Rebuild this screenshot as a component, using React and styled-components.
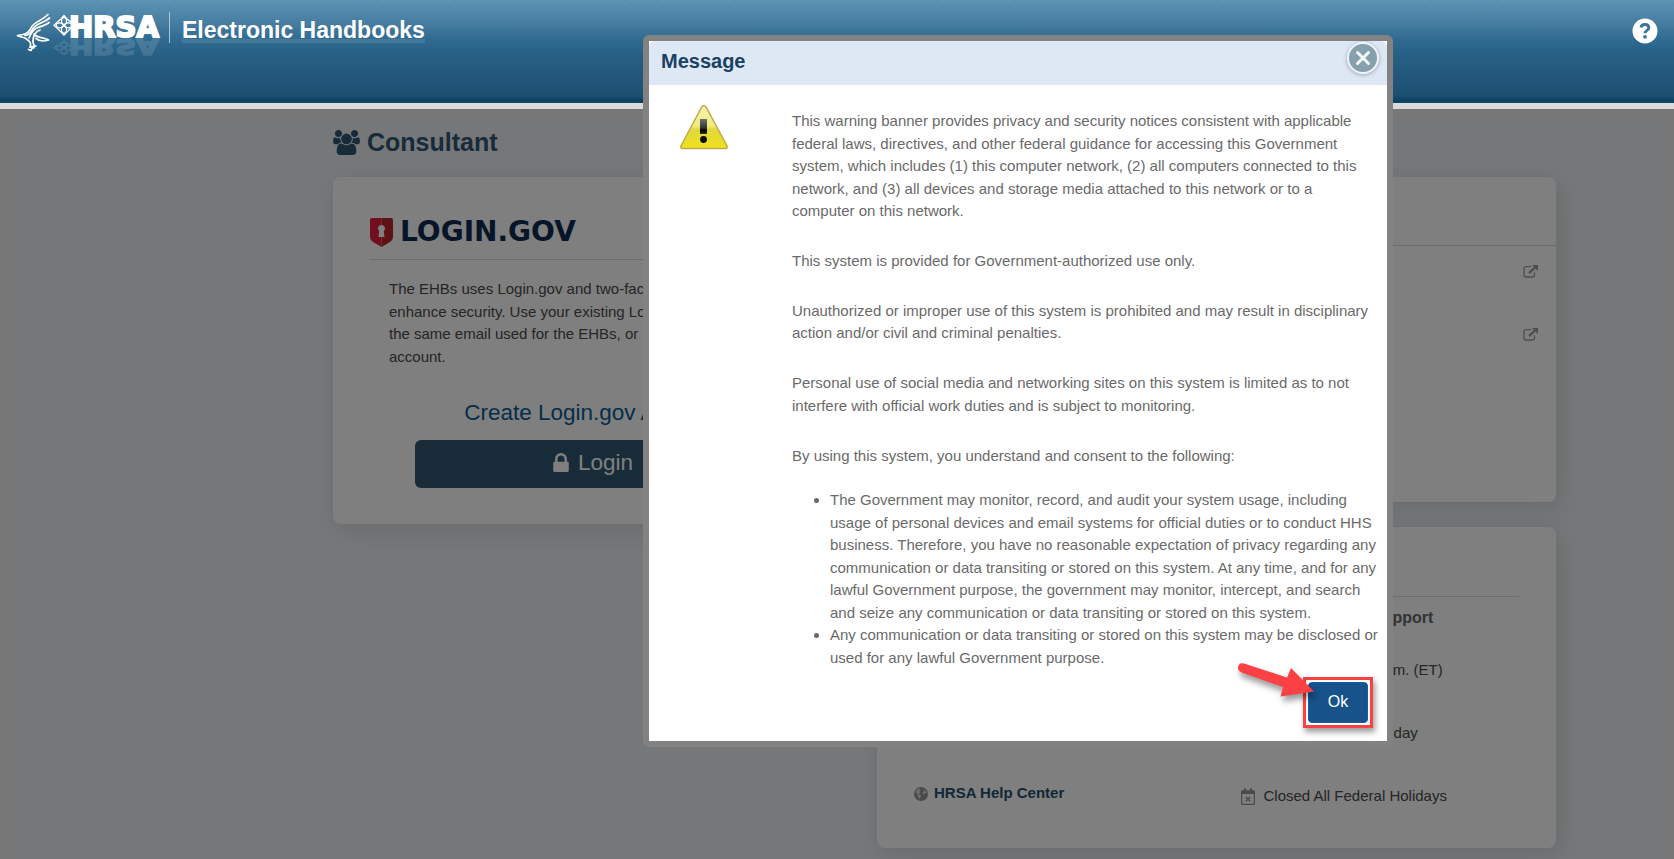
import styled, { createGlobalStyle } from "styled-components";

const GlobalStyle = createGlobalStyle`
    * {
        box-sizing: border-box;
    }
    body {
        margin: 0;
        font-family: "Liberation Sans", Arial, sans-serif;
        font-size: 15px;
        line-height: 1.5;
        color: #4a4a4a;
    }
    h1, h2, h3, p, ul {
        margin: 0;
        padding: 0;
        font-size: inherit;
    }
    a {
        color: inherit;
        text-decoration: none;
    }
`;

const Page = styled.div`
    position: relative;
    display: flex;
    flex-direction: column;
    min-height: 100vh;
`;

/* ---------- header ---------- */

const Header = styled.header`
    display: flex;
    align-items: flex-start;
    justify-content: space-between;
    height: 109px;
    padding: 0 16px;
    border-bottom: 6px solid #dbdada;
    background: linear-gradient(
            to bottom,
            rgba(92, 148, 182, 0.5) 0,
            #457c9f 24px,
            #2f6a90 40px,
            #275f84 55px,
            #1e5174 92px,
            #1a4e70 96px,
            #0d4362 100px,
            #0f4565 103px
        ),
        repeating-linear-gradient(
            135deg,
            #6094b5 0 3px,
            #5b91b3 3px 6px
        );
`;

const Brand = styled.div`
    display: flex;
    align-items: flex-start;
`;

const BrandTitle = styled.a`
    margin-top: 12px;
    padding: 0 0 0 12px;
    border-left: 1px solid #a9c4d4;
    color: #fff;
    font-size: 23px;
    font-weight: bold;
    line-height: 33px;

    span {
        display: block;
        height: 31px;
        border-bottom: 4px solid rgba(255, 255, 255, 0.1);
        line-height: 36px;
    }
`;

const HelpButton = styled.button`
    display: flex;
    margin-top: 18px;
    padding: 0;
    border: 0;
    background: none;
    cursor: pointer;
`;

/* ---------- page behind the dialog ---------- */

const Main = styled.main`
    position: relative;
    flex: 1;
    padding: 7px 13px 0;
    background: #efefef;

    &::after {
        content: "";
        position: absolute;
        inset: 0;
        background: rgba(0, 0, 0, 0.5);
    }
`;

const Content = styled.div`
    min-height: 100%;
    padding: 10px 105px 11px 320px;
    background: #eceff2;
`;

const PageTitle = styled.h1`
    display: flex;
    align-items: center;
    gap: 7px;
    height: 32px;
    margin-bottom: 19px;
    color: #2e5672;
    font-size: 25px;
    line-height: 34px;
`;

const Columns = styled.div`
    display: grid;
    grid-template-columns: 520fr 679fr;
    gap: 24px;
    align-items: start;
`;

const Stack = styled.div`
    display: grid;
    gap: 25px;
`;

const Card = styled.section`
    border-radius: 8px;
    background: #fff;
    box-shadow: 4px 6px 24px rgba(40, 50, 40, 0.14);
`;

const LoginCard = styled(Card)`
    height: 347px;
    padding: 37px;
`;

const LoginLogo = styled.div`
    display: flex;
    align-items: center;
    gap: 7px;
    height: 46px;
    padding-bottom: 9px;
    border-bottom: 1px solid #d8d8d8;
    color: #0c2a50;
    font-family: "DejaVu Sans", sans-serif;
    font-size: 28px;
    font-weight: bold;
    line-height: 1;
`;

const LoginText = styled.p`
    padding: 18px 0 0 19px;
    white-space: nowrap;
`;

const CreateLink = styled.a`
    display: block;
    margin-top: 28px;
    color: #0b5a94;
    font-size: 1.5em;
    text-align: center;
`;

const LoginButton = styled.button`
    display: flex;
    align-items: center;
    justify-content: center;
    gap: 9px;
    width: calc(100% - 90px);
    height: 48px;
    margin: 10px 45px 0;
    padding: 0 0 2px;
    border: 0;
    border-radius: 6px;
    background: #305672;
    color: #fff;
    font-family: inherit;
    font-size: 1.5em;
    cursor: pointer;
`;

const ResourceCard = styled(Card)`
    height: 325px;
`;

const ResourceTitle = styled.div`
    height: 69px;
    border-bottom: 1px solid #d8d8d8;
`;

const ResourceLink = styled.a`
    display: flex;
    align-items: center;
    justify-content: flex-end;
    height: 63px;
    padding: 0 18px 13px 37px;
`;

const SupportCard = styled(Card)`
    height: 321px;
    padding: 24px 37px;
`;

const SupportTitle = styled.div`
    height: 46px;
    border-bottom: 1px solid #d8d8d8;
`;

const SupportGrid = styled.div`
    display: grid;
    grid-template-columns: 1fr 1fr;
    gap: 48px;
`;

const SupportColumn = styled.div`
    display: flex;
    flex-direction: column;
    justify-content: ${({ $end }) => ($end ? "flex-end" : "flex-start")};
    padding-bottom: ${({ $end }) => ($end ? "3px" : "0")};
    white-space: nowrap;
`;

const SupportHeading = styled.h3`
    height: 42px;
    padding-top: 9px;
    color: #666;
    font-size: 16px;
`;

const SupportRow = styled.div`
    display: flex;
    align-items: center;
    gap: 9px;
    height: 63px;
`;

const HelpCenterLink = styled.a`
    display: flex;
    align-items: center;
    gap: 6px;
    height: 63px;
    color: #24506e;
    font-weight: bold;
`;

/* ---------- dialog ---------- */

const DialogLayer = styled.div`
    position: absolute;
    inset: 0;
    display: flex;
    justify-content: center;
    align-items: flex-start;
    padding: 35px 0 0 362px;
`;

const Dialog = styled.div`
    width: 750px;
    border: 6px solid #828282;
    border-radius: 6px;
    background: #fff;
    color: #6a6a6a;
`;

const DialogHeader = styled.header`
    display: flex;
    align-items: flex-start;
    justify-content: space-between;
    height: 44px;
    padding: 1px 8px 0 12px;
    border-bottom: 1px solid #e6e6e6;
    border-radius: 6px 6px 0 0;
    background: #dee8f5;
`;

const DialogTitle = styled.h2`
    color: #1a4164;
    font-size: 20px;
    line-height: 38px;
`;

const CloseButton = styled.button`
    display: flex;
    align-items: center;
    justify-content: center;
    width: 32px;
    height: 32px;
    padding: 0;
    border: 2px solid #f1f5fa;
    border-radius: 50%;
    background: #86a0ad;
    box-shadow: 0 1px 4px rgba(60, 70, 80, 0.4);
    cursor: pointer;
`;

const DialogBody = styled.div`
    display: grid;
    grid-template-columns: 48px 1fr;
    column-gap: 64px;
    padding: 20px 5px 0 31px;
`;

const Notice = styled.div`
    padding-top: 5px;

    p {
        margin-bottom: 1.83em;
        padding-right: 6px;
    }
    p:last-of-type {
        margin-bottom: 22px;
    }
    ul {
        padding-left: 38px;
    }
`;

const DialogFooter = styled.footer`
    display: flex;
    justify-content: flex-end;
    padding: 8px 14px 13px;
`;

const Highlight = styled.div`
    position: relative;
    padding: 2px;
    border: 3px solid #fb4143;
    box-shadow: 2px 4px 6px rgba(0, 0, 0, 0.4);
`;

const Arrow = styled.svg`
    position: absolute;
    right: 54px;
    bottom: 26px;
    filter: drop-shadow(2px 5px 3px rgba(0, 0, 0, 0.4));
`;

const OkButton = styled.button`
    display: block;
    width: 60px;
    height: 41px;
    padding: 0 0 2px;
    border: 1px solid #0d5fae;
    border-radius: 4px;
    background: #17528a;
    color: #fff;
    font-family: inherit;
    font-size: 16px;
    cursor: pointer;
`;

/* ---------- drawings ---------- */

const HrsaLogo = () => (
    <svg width="153" height="58" viewBox="16 0 153 58" role="img" aria-label="HRSA">
        <g fill="none" stroke="#fff" strokeWidth="1.7" strokeLinejoin="round" strokeLinecap="round">
            <path d="M17.500 35.500 L23 34.500 C27 34 29 32 31 28 C34 21.500 41 21.500 48 14.500" />
            <path d="M18 36 L25 38 L29 41 C31 43 31 45 30 47" />
            <path d="M25 35.500 C30 35.500 31.500 31 33.500 28 C37 23 44 23 49.500 18" />
            <path d="M29 38 C31 33 34 29 38 27.500 C42 26 46 25 49 22.500" />
            <path d="M33 41 C33 36 35 32 40 30" />
            <path d="M34 34 C36 38 43 37 48.500 40 C44 41.500 39 41 36 38.500" />
            <path d="M33 41 C33 45 35 45 34 48 M28.500 49.500 L31 50.500 L32.500 47.500 M30 47 L36 46" />
        </g>
        <g id="hrsa-mark">
            <g fill="none" stroke="#fff" strokeWidth="1.3">
                <path d="M64 15.500 L67 19 L70 21.500 L74 25.300 L70 29 L67 32 L64 35 L61 32 L58 29 L54 25.300 L58 21.500 L61 19 Z" />
                <ellipse cx="64" cy="21" rx="2.500" ry="3.500" />
                <ellipse cx="64" cy="29.600" rx="2.500" ry="3.500" />
                <ellipse cx="59.700" cy="25.300" rx="3.500" ry="2.500" />
                <ellipse cx="68.300" cy="25.300" rx="3.500" ry="2.500" />
            </g>
            <text
                x="69"
                y="37"
                fill="#fff"
                stroke="#fff"
                strokeWidth="2"
                fontFamily="DejaVu Sans"
                fontWeight="bold"
                fontSize="29"
            >
                HRSA
            </text>
        </g>
        <use href="#hrsa-mark" transform="translate(0 66) scale(1 -0.720)" opacity="0.13" />
    </svg>
);

const HelpIcon = () => (
    <svg width="26" height="26" viewBox="0 0 26 26" aria-hidden="true">
        <circle cx="13" cy="13" r="12.500" fill="#fff" />
        <path d="M9 9.500 C9.500 5.500 16.800 5.500 16.800 9.800 C16.800 12.500 13 12.300 13 15.300" fill="none" stroke="#3a769b" strokeWidth="2.900" />
        <circle cx="13" cy="18.800" r="1.900" fill="#3a769b" />
    </svg>
);

const UsersIcon = () => (
    <svg width="27" height="25" viewBox="64 0 1920 1792" fill="currentColor" aria-hidden="true">
        <path d="M657 896q-162 5-265 128h-134q-82 0-138-40.500t-56-118.500q0-353 124-353 6 0 43.500 21t97.500 42.500 119 21.500q67 0 133-23-5 37-5 66 0 139 81 256zm1071 637q0 120-73 189.500t-194 69.500h-874q-121 0-194-69.500t-73-189.500q0-53 3.500-103.500t14-109 26.500-108.500 43-97.500 62-81 85.500-53.500 111.500-20q10 0 43 21.500t73 48 107 48 135 21.500 135-21.500 107-48 73-48 43-21.500q61 0 111.500 20t85.500 53.500 62 81 43 97.500 26.500 108.500 14 109 3.500 103.500zm-1024-1277q0 106-75 181t-181 75-181-75-75-181 75-181 181-75 181 75 75 181zm704 384q0 159-112.500 271.500t-271.500 112.500-271.500-112.500-112.500-271.500 112.500-271.500 271.500-112.500 271.500 112.500 112.500 271.500zm576 225q0 78-56 118.500t-138 40.500h-134q-103-123-265-128 81-117 81-256 0-29-5-66 66 23 133 23 59 0 119-21.500t97.500-42.500 43.500-21q124 0 124 353zm-128-609q0 106-75 181t-181 75-181-75-75-181 75-181 181-75 181 75 75 181z" />
    </svg>
);

const LockIcon = () => (
    <svg width="16" height="19" viewBox="320 128 1152 1408" fill="currentColor" aria-hidden="true">
        <path d="M640 768h512v-192q0-106-75-181t-181-75-181 75-75 181v192zm832 96v576q0 40-28 68t-68 28h-960q-40 0-68-28t-28-68v-576q0-40 28-68t68-28h32v-192q0-184 132-316t316-132 316 132 132 316v192h32q40 0 68 28t28 68z" />
    </svg>
);

const Shield = () => (
    <svg width="23" height="29" viewBox="0 0 23 29" aria-hidden="true">
        <path d="M2 0 H11.500 V29 L3 24 Q0 22 0 19 V2 Q0 0 2 0Z" fill="#e61c42" />
        <path d="M11.500 0 H21 Q23 0 23 2 V19 Q23 22 20 24 L11.500 29Z" fill="#bd2427" />
        <path d="M11.500 7 A3.500 3.500 0 0 1 13.800 13.200 L14.500 19 H8.500 L9.200 13.200 A3.500 3.500 0 0 1 11.500 7Z" fill="#fff" />
    </svg>
);

const ExternalIcon = () => (
    <svg width="15" height="13" viewBox="0 0 15 13" fill="none" stroke="#9c9c9c" aria-hidden="true">
        <path d="M8 1.600 H3 Q1 1.600 1 3.600 V10 Q1 12 3 12 H9.500 Q11.500 12 11.500 10 V7.500" strokeWidth="1.300" />
        <path d="M6 8.200 L12.500 2" strokeWidth="2.400" />
        <path d="M9 0 H15 V6Z" fill="#9c9c9c" stroke="none" />
    </svg>
);

const GlobeIcon = () => (
    <svg width="14" height="14" viewBox="0 0 14 14" aria-hidden="true">
        <circle cx="7" cy="7" r="7" fill="#949494" />
        <path d="M1.500 4 L4 1.500 L6.500 2 L5.500 4 L7 5 L4.500 7 L7 8.500 L6 12 L4 10 L3.500 7.500Z M9 2 L12 4 L12.800 7 L11 6 L9.500 8 L8.500 5.500 L10 4Z" fill="#d9d9d9" />
    </svg>
);

const CalendarIcon = () => (
    <svg width="14" height="17" viewBox="0 0 14 17" fill="none" stroke="#949494" aria-hidden="true">
        <rect x="0.600" y="3" width="12.800" height="13.300" rx="1" strokeWidth="1.200" />
        <path d="M0.500 2.500 H13.500 V6 H0.500Z" fill="#949494" stroke="none" />
        <path d="M4 0.500 V4 M10 0.500 V4" strokeWidth="2.400" />
        <path d="M4.800 8.800 L9.200 13.200 M9.200 8.800 L4.800 13.200" strokeWidth="1.400" />
    </svg>
);

const Warning = () => (
    <svg width="48" height="45" viewBox="0 0 48 45" aria-hidden="true">
        <defs>
            <linearGradient id="warn" x1="0" y1="0" x2="0" y2="1">
                <stop offset="0" stopColor="#f7f3b4" />
                <stop offset="0.480" stopColor="#eeea7c" />
                <stop offset="0.550" stopColor="#dfd93e" />
                <stop offset="1" stopColor="#f0e11c" />
            </linearGradient>
            <linearGradient id="mark" x1="0" y1="0" x2="0" y2="1">
                <stop offset="0" stopColor="#707070" />
                <stop offset="0.600" stopColor="#333" />
                <stop offset="0.750" stopColor="#000" />
                <stop offset="1" stopColor="#333" />
            </linearGradient>
        </defs>
        <path
            d="M21.700 2 Q24 -0.500 26 2 L46.800 40.500 Q48 43.500 45.500 43.500 H2.500 Q0 43.500 1.200 40.500Z"
            fill="url(#warn)"
            stroke="#c2ab4a"
            strokeWidth="1.500"
        />
        <rect x="20" y="14" width="7" height="15" fill="url(#mark)" />
        <circle cx="23.500" cy="34.500" r="3.400" fill="#0a0a00" />
    </svg>
);

const paragraphs = [
    "This warning banner provides privacy and security notices consistent with applicable federal laws, directives, and other federal guidance for accessing this Government system, which includes (1) this computer network, (2) all computers connected to this network, and (3) all devices and storage media attached to this network or to a computer on this network.",
    "This system is provided for Government-authorized use only.",
    "Unauthorized or improper use of this system is prohibited and may result in disciplinary action and/or civil and criminal penalties.",
    "Personal use of social media and networking sites on this system is limited as to not interfere with official work duties and is subject to monitoring.",
    "By using this system, you understand and consent to the following:",
];

const terms = [
    "The Government may monitor, record, and audit your system usage, including usage of personal devices and email systems for official duties or to conduct HHS business. Therefore, you have no reasonable expectation of privacy regarding any communication or data transiting or stored on this system. At any time, and for any lawful Government purpose, the government may monitor, intercept, and search and seize any communication or data transiting or stored on this system.",
    "Any communication or data transiting or stored on this system may be disclosed or used for any lawful Government purpose.",
];

const hours = [
    "8:00 a.m. to 8:00 p.m. (ET)",
    "Monday through Friday",
    "Closed All Federal Holidays",
];

const App = () => {
    return (
        <Page>
            <GlobalStyle />
            <Header>
                <Brand>
                    <HrsaLogo />
                    <BrandTitle href="#">
                        <span>Electronic Handbooks</span>
                    </BrandTitle>
                </Brand>
                <HelpButton aria-label="Help">
                    <HelpIcon />
                </HelpButton>
            </Header>

            <Main>
                <Content>
                    <PageTitle>
                        <UsersIcon />
                        Consultant
                    </PageTitle>
                    <Columns>
                        <LoginCard>
                            <LoginLogo>
                                <Shield />
                                LOGIN.GOV
                            </LoginLogo>
                            <LoginText>
                                The EHBs uses Login.gov and two-factor
                                <br />
                                enhance security. Use your existing Login.gov
                                <br />
                                the same email used for the EHBs, or
                                <br />
                                account.
                            </LoginText>
                            <CreateLink href="#">Create Login.gov Account</CreateLink>
                            <LoginButton>
                                <LockIcon />
                                Login
                            </LoginButton>
                        </LoginCard>

                        <Stack>
                            <ResourceCard>
                                <ResourceTitle />
                                <ResourceLink href="#" aria-label="Open resource in a new window">
                                    <ExternalIcon />
                                </ResourceLink>
                                <ResourceLink href="#" aria-label="Open resource in a new window">
                                    <ExternalIcon />
                                </ResourceLink>
                            </ResourceCard>

                            <SupportCard>
                                <SupportTitle />
                                <SupportGrid>
                                    <SupportColumn $end>
                                        <HelpCenterLink href="#">
                                            <GlobeIcon />
                                            HRSA Help Center
                                        </HelpCenterLink>
                                    </SupportColumn>
                                    <SupportColumn>
                                        <SupportHeading>Hours of System Support</SupportHeading>
                                        {hours.map((text) => (
                                            <SupportRow key={text}>
                                                <CalendarIcon />
                                                {text}
                                            </SupportRow>
                                        ))}
                                    </SupportColumn>
                                </SupportGrid>
                            </SupportCard>
                        </Stack>
                    </Columns>
                </Content>
            </Main>

            <DialogLayer>
                <Dialog role="dialog" aria-labelledby="message-title">
                    <DialogHeader>
                        <DialogTitle id="message-title">Message</DialogTitle>
                        <CloseButton aria-label="Close">
                            <svg width="16" height="16" viewBox="0 0 16 16" stroke="#f4f8fb" strokeWidth="3" strokeLinecap="round">
                                <path d="M2.500 2.500 L13.500 13.500 M13.500 2.500 L2.500 13.500" />
                            </svg>
                        </CloseButton>
                    </DialogHeader>
                    <DialogBody>
                        <Warning />
                        <Notice>
                            {paragraphs.map((text) => (
                                <p key={text}>{text}</p>
                            ))}
                            <ul>
                                {terms.map((text) => (
                                    <li key={text}>{text}</li>
                                ))}
                            </ul>
                        </Notice>
                    </DialogBody>
                    <DialogFooter>
                        <Highlight>
                            <OkButton>Ok</OkButton>
                            <Arrow width="80" height="40" viewBox="0 0 80 40" fill="#fb4143" aria-hidden="true">
                                <path d="M8 4.500 Q3 3 2 8 Q1.500 12 5.500 13.500 L47 28 L44.500 37.500 L78 32.500 L55 9 L51 18.500Z" />
                            </Arrow>
                        </Highlight>
                    </DialogFooter>
                </Dialog>
            </DialogLayer>
        </Page>
    );
};

export default App;
